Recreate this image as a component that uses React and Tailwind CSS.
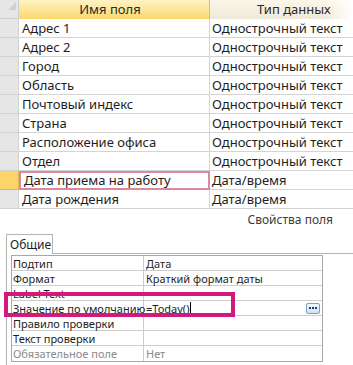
import React from "react";

const rows = [
  ["Адрес 1", "Однострочный текст"],
  ["Адрес 2", "Однострочный текст"],
  ["Город", "Однострочный текст"],
  ["Область", "Однострочный текст"],
  ["Почтовый индекс", "Однострочный текст"],
  ["Страна", "Однострочный текст"],
  ["Расположение офиса", "Однострочный текст"],
  ["Отдел", "Однострочный текст"],
  ["Дата приема на работу", "Дата/время", true],
  ["Дата рождения", "Дата/время"],
];

const props = [
  ["Подтип", "Дата"],
  ["Формат", "Краткий формат даты"],
  ["Label Text", ""],
  ["Значение по умолчанию", "=Today()", false, true],
  ["Правило проверки", ""],
  ["Текст проверки", ""],
  ["Обязательное поле", "Нет", true],
];

export default function App() {
  return (
    <div
      className="relative w-[353px] h-[365px] overflow-hidden bg-white text-[#1e1e1e]"
      style={{ fontFamily: '"Noto Sans", "Open Sans", sans-serif' }}
    >
      {/* top grid */}
      <div className="flex flex-col text-[13px] leading-none">
        <div className="flex h-[19px]">
          <div className="w-[19px] shrink-0 bg-[#e6e6e6] border-r border-b border-[#cfcfcf] flex items-start justify-end pr-[2px] pt-[2px]">
            <svg width="8" height="8" viewBox="0 0 8 8">
              <path d="M8 0 L8 8 L0 8 Z" fill="#d0d0d0" />
            </svg>
          </div>
          <div className="w-[191px] shrink-0 bg-gradient-to-b from-[#fff3c4] to-[#fbd869] border-r border-[#e0c070] flex items-center justify-center text-[#2a2a2a] pr-[8px]">
            Имя поля
          </div>
          <div className="flex-1 bg-[linear-gradient(to_right,rgba(255,255,255,0)_80%,#ffffff_100%),linear-gradient(to_bottom,#fbf6e8,#efe9da)] flex items-center pl-[47px] text-[#2a2a2a]">
            Тип данных
          </div>
        </div>
        {rows.map(([name, type, sel]) => (
          <div key={name} className="flex h-[19px]">
            <div
              className={
                "w-[19px] shrink-0 border-r border-b " +
                (sel
                  ? "bg-[#fbd46a] border-[#e2b850]"
                  : "bg-[#e6e6e6] border-[#d2d2d2]")
              }
            />
            <div
              className={
                "w-[191px] shrink-0 flex items-center pl-[3px] " +
                (sel
                  ? "border-2 border-[#d98a9c]"
                  : "border-r border-b border-[#d4d4d4]")
              }
            >
              {name}
            </div>
            <div className="flex-1 flex items-center pl-[2px] border-b border-[#d4d4d4] whitespace-nowrap">
              {type}
            </div>
          </div>
        ))}
      </div>

      {/* properties */}
      <div className="h-[25px] flex justify-end pr-[20px] pt-[4px] text-[12px] leading-[14px] text-[#3c3c3c]">
        Свойства поля
      </div>
      <div className="ml-[6px] w-[47px] h-[20px] border border-b-0 border-[#b4b4b4] bg-white flex items-center pl-[3px] text-[12px] relative z-10">
        Общие
      </div>
      <div className="ml-[6px] -mt-px border-l border-t border-[#b4b4b4] pl-[4px] pt-[1px] pb-[10px]">
        <div className="w-[312px] border border-[#a8a8a8] text-[11px] leading-[13px]">
          {props.map(([k, v, dim, edit], i) => (
            <div
              key={k}
              className={
                "flex h-[15px] " +
                (i < props.length - 1 ? "border-b border-[#cdcdcd]" : "")
              }
            >
              <div
                className={
                  "w-[132px] shrink-0 border-r border-[#cdcdcd] flex items-center pl-[1px] whitespace-nowrap " +
                  (dim ? "text-[#8a8a8a]" : "")
                }
              >
                {k}
              </div>
              <div
                className={
                  "flex-1 flex items-center pl-[2px] pr-[2px] whitespace-nowrap " +
                  (dim ? "text-[#8a8a8a]" : "")
                }
              >
                {edit ? (
                  <>
                    <span>{v}</span>
                    <span className="w-px h-[12px] bg-black ml-[1px]" />
                    <span className="ml-auto w-[14px] h-[11px] rounded-[2px] border border-[#7b9fcf] bg-gradient-to-b from-[#f2f7fd] to-[#cfdff3] flex items-center justify-center gap-[1px]">
                      <span className="w-[2px] h-[2px] bg-[#1d3d78]" />
                      <span className="w-[2px] h-[2px] bg-[#1d3d78]" />
                      <span className="w-[2px] h-[2px] bg-[#1d3d78]" />
                    </span>
                  </>
                ) : (
                  v
                )}
              </div>
            </div>
          ))}
        </div>
      </div>

      {/* highlight overlay */}
      <div className="absolute left-[4px] top-[292px] w-[231px] h-[25px] border-[4px] border-[#d4197d] pointer-events-none" />
    </div>
  );
}
